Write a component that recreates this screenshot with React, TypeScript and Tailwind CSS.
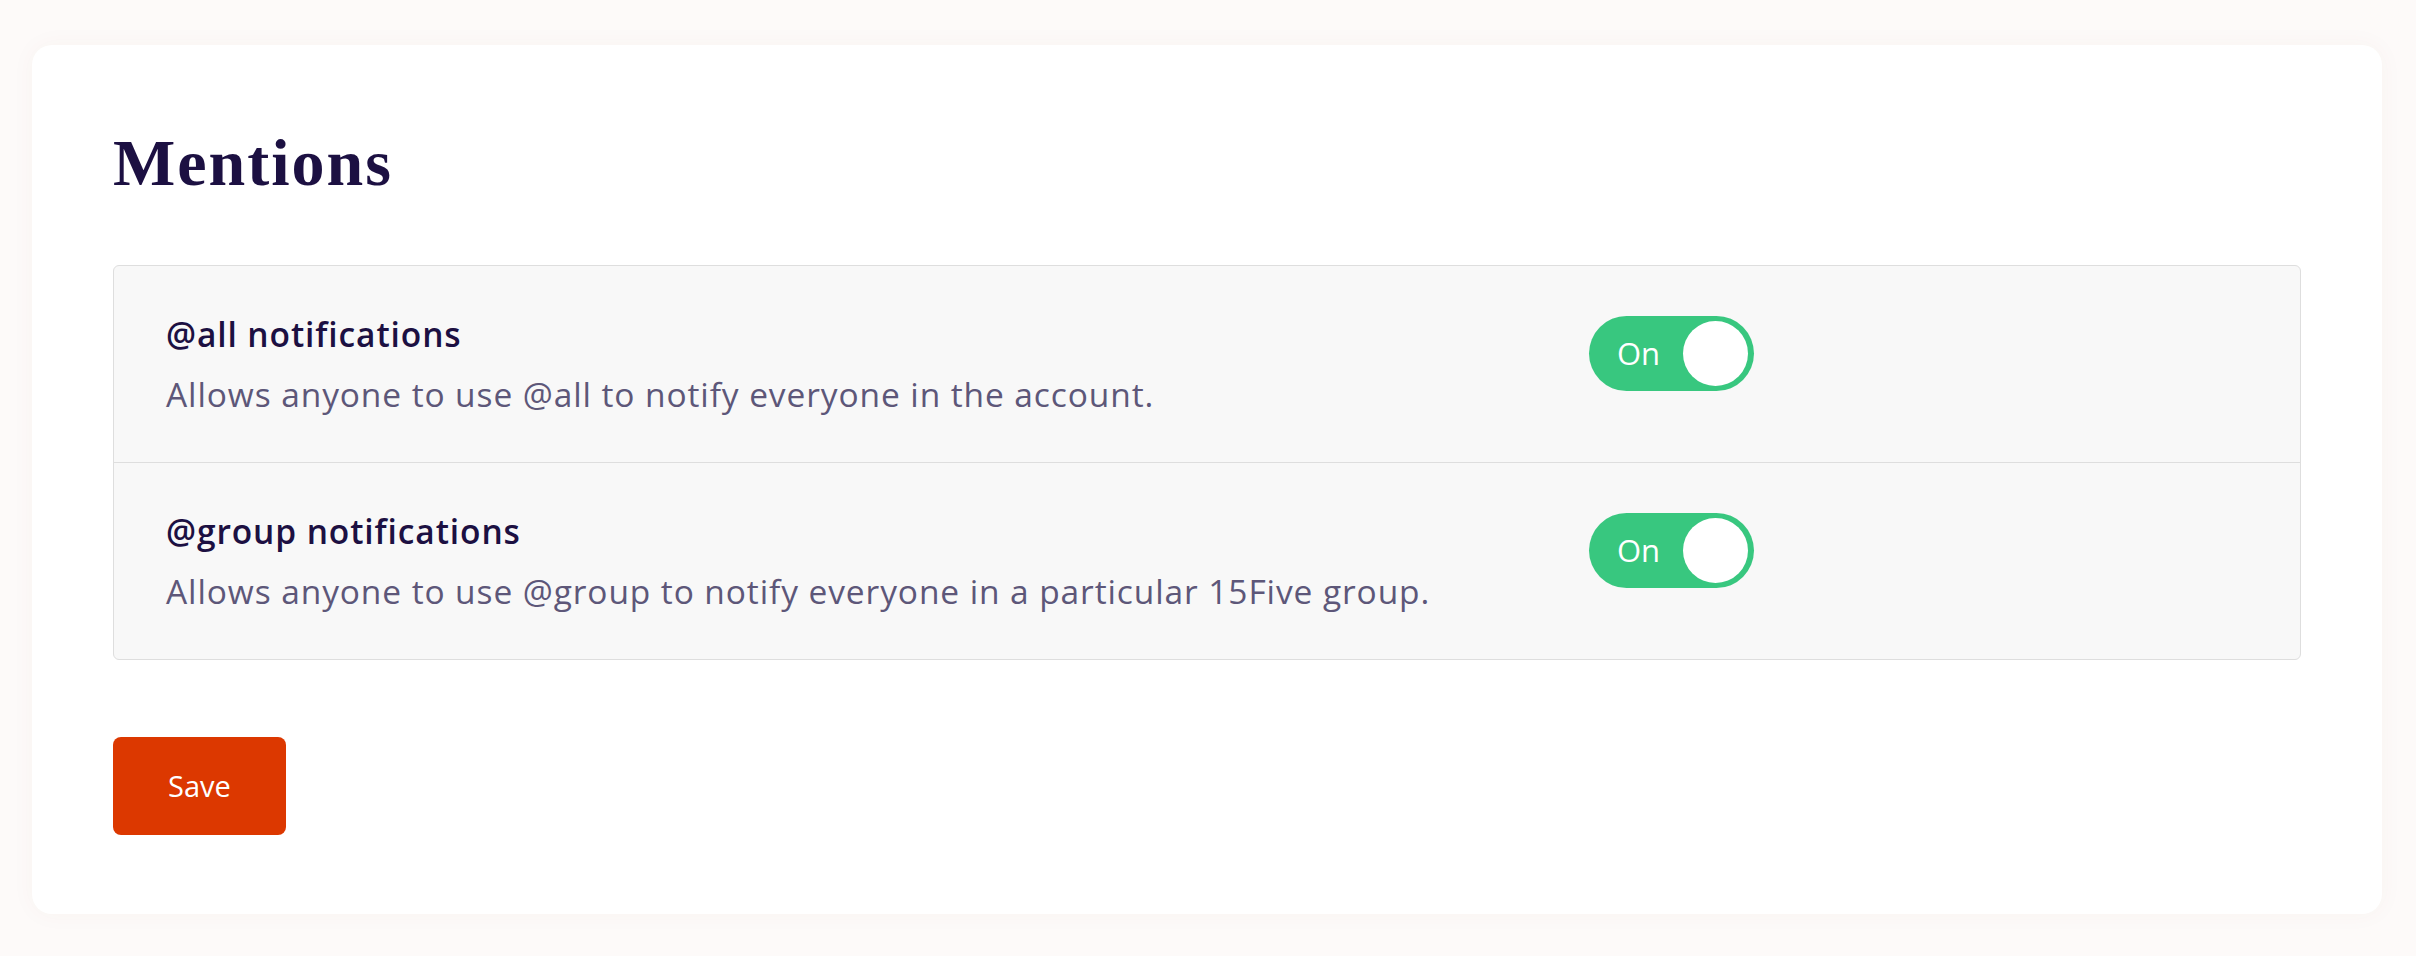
import React from "react";

const sans = { fontFamily: "'Open Sans', Lato, sans-serif" };

function Toggle() {
  return (
    <div className="mt-[2px] flex h-[75px] w-[165px] shrink-0 items-center justify-between rounded-full bg-[#38c77f] pl-[28px] pr-[6px]">
      <span className="text-[31px] leading-none text-white" style={sans}>On</span>
      <span className="h-[65px] w-[65px] rounded-full bg-white" />
    </div>
  );
}

function Row({ title, desc, last }: { title: string; desc: string; last?: boolean }) {
  return (
    <div className={"flex items-start px-[52px] py-[48px] " + (last ? "" : "border-b border-[#dedede]")}>
      <div className="w-[1423px] shrink-0">
        <div className="text-[33.5px] font-semibold leading-[40px] tracking-[0.9px] text-[#1c1042]">{title}</div>
        <div className="mt-[20px] text-[33.5px] leading-[40px] tracking-[0.9px] text-[#5d5779]">{desc}</div>
      </div>
      <Toggle />
    </div>
  );
}

export default function App() {
  return (
    <div className="min-h-[956px] w-full bg-[#fdfaf9] pl-[32px] pr-[34px] pt-[45px] pb-[44px]" style={sans}>
      <div className="rounded-[20px] bg-white px-[81px] pb-[79px] pt-[85px] shadow-[0_0_24px_rgba(120,80,60,0.04)]">
        <h1 className="text-[66px] font-bold leading-none tracking-[2px] text-[#1c1042]" style={{ fontFamily: "'Liberation Serif', serif" }}>Mentions</h1>
        <div className="mt-[69px] overflow-hidden rounded-[6px] border border-[#dedede] bg-[#f8f8f8]">
          <Row title="@all notifications" desc="Allows anyone to use @all to notify everyone in the account." />
          <Row title="@group notifications" desc="Allows anyone to use @group to notify everyone in a particular 15Five group." last />
        </div>
        <button className="mt-[77px] flex h-[98px] w-[173px] items-center justify-center rounded-[8px] bg-[#dc3800] text-[29px] text-white" style={sans}>Save</button>
      </div>
    </div>
  );
}
